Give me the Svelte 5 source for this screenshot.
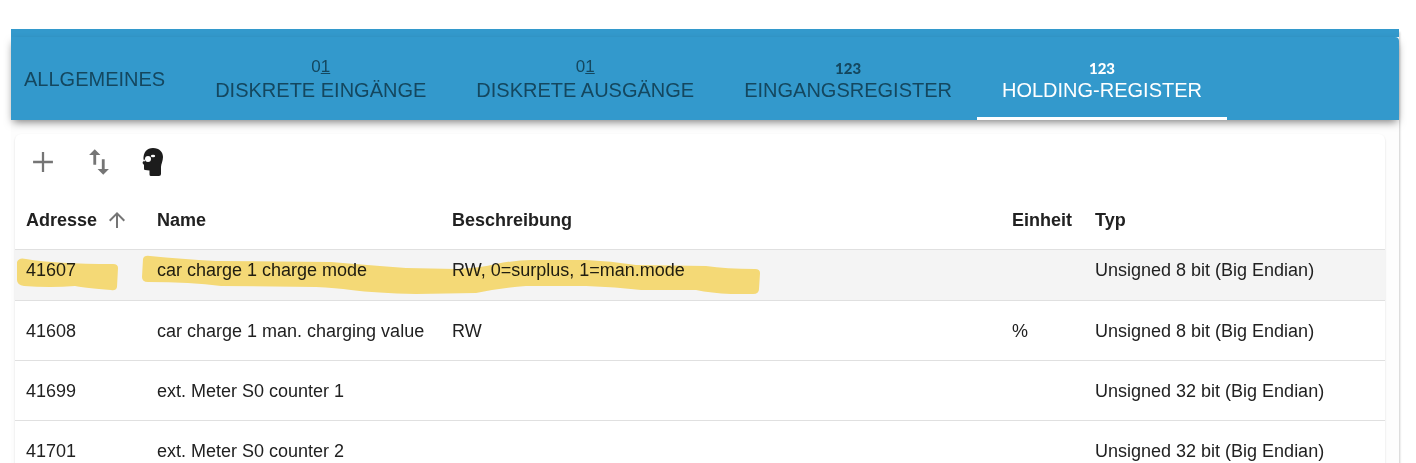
<script>
    const tabs = [
        { label: 'Allgemeines', icon: '' },
        { label: 'Diskrete Eingänge', icon: 'binary' },
        { label: 'Diskrete Ausgänge', icon: 'binary' },
        { label: 'Eingangsregister', icon: 'digits' },
        { label: 'Holding-Register', icon: 'digits' },
    ];
    let selected = $state(4);
    let ascending = $state(true);

    const registers = [
        { address: 41607, name: 'car charge 1 charge mode', description: 'RW, 0=surplus, 1=man.mode', unit: '', type: 'Unsigned 8 bit (Big Endian)', marked: true },
        { address: 41608, name: 'car charge 1 man. charging value', description: 'RW', unit: '%', type: 'Unsigned 8 bit (Big Endian)' },
        { address: 41699, name: 'ext. Meter S0 counter 1', description: '', unit: '', type: 'Unsigned 32 bit (Big Endian)' },
        { address: 41701, name: 'ext. Meter S0 counter 2', description: '', unit: '', type: 'Unsigned 32 bit (Big Endian)' },
    ];
    const rows = $derived([...registers].sort((a, b) => ascending ? a.address - b.address : b.address - a.address));
</script>

<div class="dialog">
    <div class="strip"></div>
    <div class="tabs" role="tablist">
        {#each tabs as tab, i}
            <button class="tab" class:active={selected === i} role="tab" aria-selected={selected === i} onclick={() => selected = i}>
                {#if tab.icon === 'binary'}
                    <span class="binary">0<u>1</u></span>
                {:else if tab.icon === 'digits'}
                    <span class="digits">123</span>
                {/if}
                <span>{tab.label}</span>
            </button>
        {/each}
    </div>

    <main>
        <div class="paper">
            <div class="toolbar">
                <button class="tool" aria-label="Hinzufügen">
                    <svg viewBox="0 0 24 24"><path d="M19 12.8h-6.2v6.2h-1.6v-6.2H5v-1.6h6.2V5h1.6v6.2H19z" /></svg>
                </button>
                <button class="tool" aria-label="Importieren und exportieren">
                    <svg viewBox="0 0 24 24"><path d="M9 3L5 6.99h3V14h2V6.99h3L9 3zm7 14.01V10h-2v7.01h-3L15 21l4-3.99h-3z" /></svg>
                </button>
                <button class="tool dark" aria-label="Expertenmodus">
                    <svg viewBox="0 0 34 34">
                        <path d="M7 25 Q6 25 6 23.5 L6 20 L4.5 18 L5.5 15 C5 7 9 3 15 3 C21.5 3 25 7 25 12 C25 16 23 19 23 22 L23 29 Q23 31 21 31 L13 31 Q11.500 31 11.5 29.5 L11.5 25.5 Z" />
                        <circle cx="10" cy="14" r="3" fill="#fff" />
                        <circle cx="6" cy="15.5" r="1" fill="#fff" />
                        <ellipse cx="15" cy="11" rx="2.2" ry="1.2" fill="#fff" />
                    </svg>
                </button>
            </div>

            <table>
                <thead>
                    <tr>
                        <th class="address">
                            <button class="sort" onclick={() => ascending = !ascending}>
                                Adresse
                                <svg class:flipped={!ascending} viewBox="0 0 24 24"><path d="M4 12l1.41 1.41L11 7.83V20h2V7.83l5.58 5.59L20 12l-8-8-8 8z" /></svg>
                            </button>
                        </th>
                        <th class="name">Name</th>
                        <th>Beschreibung</th>
                        <th class="unit">Einheit</th>
                        <th class="type">Typ</th>
                    </tr>
                </thead>
                <tbody>
                    {#each rows as row}
                        <tr class:marked={row.marked}>
                            <td>
                                {row.address}
                                {#if row.marked}
                                    <svg class="marker" width="131" height="51" viewBox="0 0 131 51">
                                        <path d="M2 12 Q4 7 11 9 Q40 14 98 14 Q103 14 103 18 L102 37 Q101 41 96 40 Q70 38 60 36 Q35 38 9 36 Q2 35 2 30 Z" />
                                    </svg>
                                {/if}
                            </td>
                            <td>
                                {row.name}
                                {#if row.marked}
                                    <svg class="marker" width="630" height="51" viewBox="0 0 630 51">
                                        <path d="M-3 9 Q-2 5 4 6 Q35 9 70 11 L185 12 Q220 15 260 18 L310 19 Q335 18 350 14 Q370 10 385 10 L440 10 Q465 11 490 15 L560 16 Q580 19 609 19 Q614 19 614 23 L613 39 Q613 44 607 44 L585 44 Q565 43 550 40 L495 40 Q470 37 440 36 L380 36 Q355 38 330 43 L270 44 Q230 43 205 40 Q190 38 170 37 L75 36 Q45 32 2 32 Q-4 32 -4 27 Z" />
                                    </svg>
                                {/if}
                            </td>
                            <td>{row.description}</td>
                            <td>{row.unit}</td>
                            <td>{row.type}</td>
                        </tr>
                    {/each}
                </tbody>
            </table>
        </div>
    </main>
</div>

<style>
    :global(body) {
        background: #fff;
        color: #212121;
        font-family: "Liberation Sans", Arial, sans-serif;
        font-size: 18px;
        line-height: 20px;
    }

    button {
        border: 0;
        padding: 0;
        background: none;
        color: inherit;
        font: inherit;
        cursor: pointer;
    }

    .dialog {
        margin: 29px 17px 0 11px;
        box-shadow: 2px 2px 2px -1px rgba(0, 0, 0, 0.2);
    }

    .strip {
        height: 8px;
        background: #3399cc;
    }

    .tabs {
        position: relative;
        display: flex;
        height: 83px;
        background: #3399cc;
        border-top-right-radius: 4px;
        box-shadow: 0 4px 8px -2px rgba(0, 0, 0, 0.5);
    }

    .tab {
        display: flex;
        flex-direction: column;
        align-items: center;
        justify-content: center;
        padding: 0 25px;
        border-bottom: 3px solid transparent;
        border-top: 3px solid transparent;
        color: #14475f;
        font-size: 20px;
        line-height: 24px;
        text-transform: uppercase;
        white-space: nowrap;
    }

    .tab:first-child {
        padding-left: 13px;
    }

    .tab.active {
        border-bottom-color: #fff;
        color: #fff;
    }

    .binary,
    .digits {
        font-size: 17px;
        line-height: 22px;
    }

    .binary u {
        text-decoration-thickness: 1px;
        text-underline-offset: 1px;
    }

    .digits {
        padding-top: 2px;
        font-family: Lato, sans-serif;
        font-size: 15px;
        font-weight: 900;
        line-height: 20px;
    }

    main {
        padding: 14px 14px 0 4px;
        background: #fdfdfd;
    }

    .paper {
        background: #fff;
        border-radius: 6px;
        box-shadow: 0 1px 2px rgba(0, 0, 0, 0.15);
    }

    .toolbar {
        display: flex;
        height: 56px;
    }

    .tool {
        width: 56px;
        padding: 11px;
    }

    .tool svg {
        display: block;
        width: 34px;
        height: 34px;
        fill: #757575;
    }

    .tool.dark svg {
        fill: #1c1c1c;
    }

    table {
        width: 100%;
        table-layout: fixed;
        border-collapse: separate;
        border-spacing: 0;
    }

    th,
    td {
        box-sizing: border-box;
        height: 60px;
        padding: 0 0 0 11px;
        border-bottom: 1px solid #e0e0e0;
        text-align: left;
        white-space: nowrap;
    }

    .address {
        width: 131px;
    }

    .name {
        width: 295px;
    }

    .unit {
        width: 83px;
    }

    .type {
        width: 301px;
    }

    .sort {
        display: flex;
        align-items: center;
        gap: 8px;
    }

    .sort svg {
        width: 24px;
        height: 24px;
        fill: #757575;
    }

    .sort svg.flipped {
        transform: rotate(180deg);
    }

    .marked td {
        position: relative;
        height: 51px;
        padding-bottom: 10px;
        background: #f4f4f4;
    }

    /* highlighter strokes run over the cell edges */
    .marker {
        position: absolute;
        top: 0;
        left: 0;
        z-index: 1;
        overflow: visible;
        fill: #ffe37b;
        mix-blend-mode: multiply;
        pointer-events: none;
    }
</style>
